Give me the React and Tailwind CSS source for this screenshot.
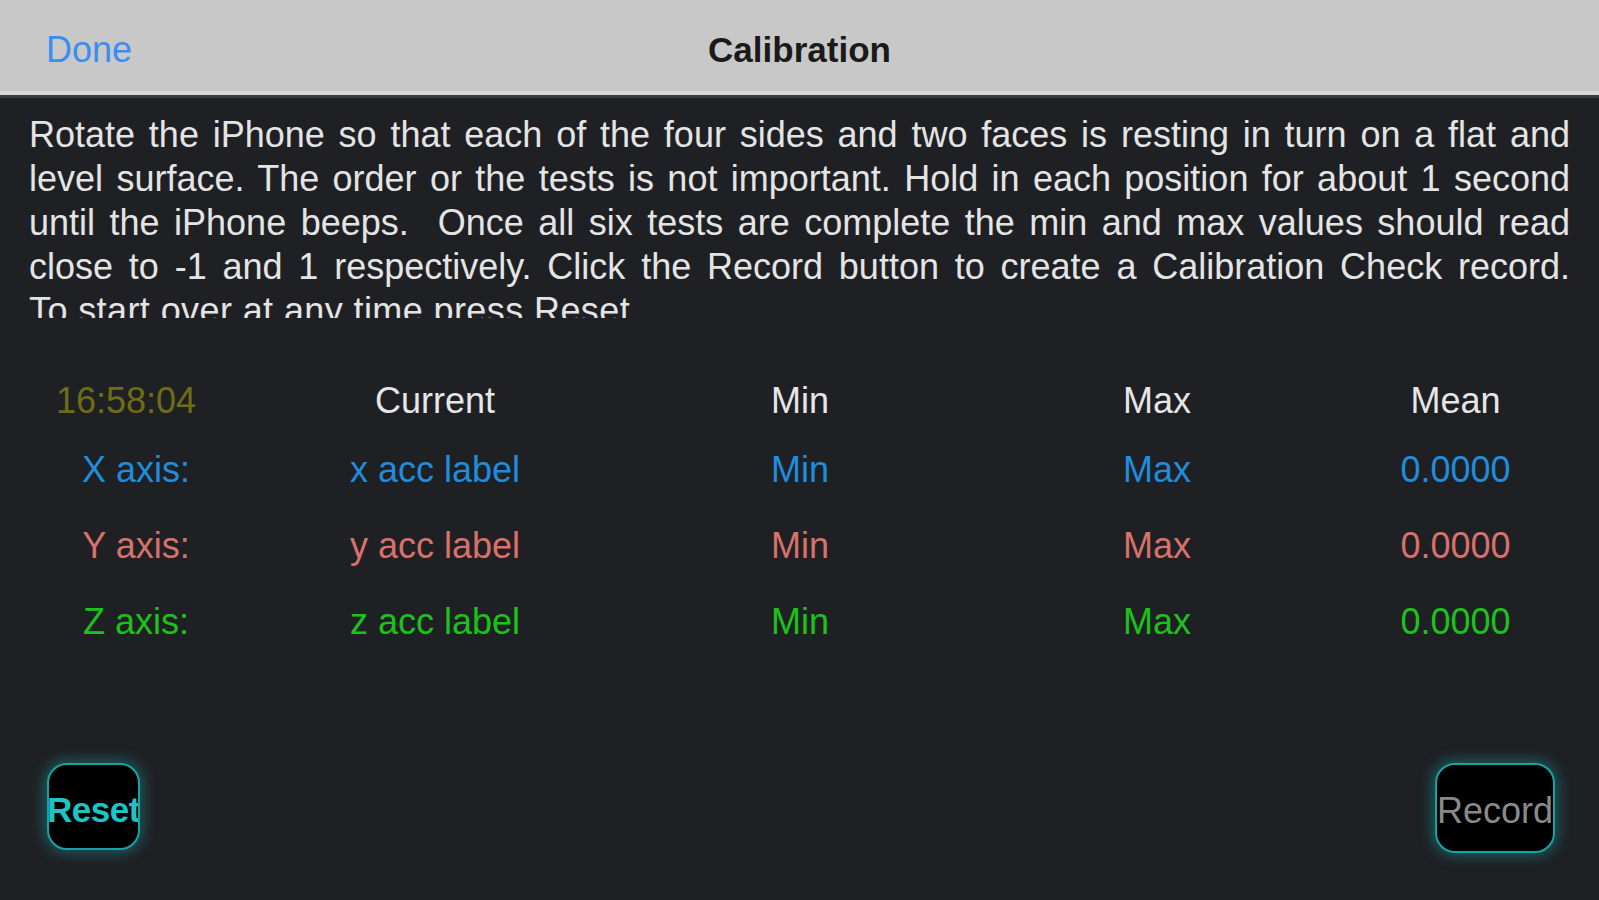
import React from "react";

const lines = [
  "Rotate the iPhone so that each of the four sides and two faces is resting in turn on a flat and",
  "level surface. The order or the tests is not important. Hold in each position for about 1 second",
  "until the iPhone beeps.  Once all six tests are complete the min and max values should read",
  "close to -1 and 1 respectively. Click the Record button to create a Calibration Check record.",
];

const rows = [
  { label: "X axis:", cur: "x acc label", color: "text-[#1f8ddb]" },
  { label: "Y axis:", cur: "y acc label", color: "text-[#d8716a]" },
  { label: "Z axis:", cur: "z acc label", color: "text-[#1cc21c]" },
];

const grid = "grid grid-cols-[272px_326px_404px_310px_287px] items-center h-[40px] text-center leading-[40px]";

export default function App() {
  return (
    <div className="w-[1599px] h-[900px] overflow-hidden bg-[#1f2024] flex flex-col" style={{ fontFamily: '"Liberation Sans", Arial, sans-serif' }}>
      {/* Nav bar */}
      <div className="h-[91px] bg-[#c8c8c8] relative flex items-center">
        <div className="pl-[46px] text-[36px] text-[#3b8ef0] leading-none pt-[8px]">Done</div>
        <div className="absolute left-0 right-0 top-[8px] bottom-0 flex items-center justify-center text-[35px] font-bold text-[#1a1a1a] leading-none pointer-events-none">
          Calibration
        </div>
      </div>
      <div className="h-[4px] bg-[#d8d8d8]" />
      <div className="h-[3px] bg-[#3a3a3a]" />

      {/* Instructions */}
      <div className="mt-[15px] px-[29px] h-[205px] overflow-hidden text-[36px] leading-[44px] text-[#e4e4e4]">
        {lines.map((l, i) => (
          <div key={i} className="text-justify [text-align-last:justify] whitespace-pre-wrap">
            {l}
          </div>
        ))}
        <div className="tracking-[0.4px]">To start over at any time press Reset.</div>
      </div>

      {/* Table */}
      <div className="mt-[63px] text-[36px]">
        <div className={grid + " mb-[29px] text-[#e6e6e6]"}>
          <div className="pr-[20px] text-[#6e6c14]">16:58:04</div>
          <div>Current</div>
          <div>Min</div>
          <div>Max</div>
          <div>Mean</div>
        </div>
        <div className="flex flex-col gap-[36px]">
          {rows.map((r) => (
            <div key={r.label} className={grid + " " + r.color}>
              <div>{r.label}</div>
              <div>{r.cur}</div>
              <div>Min</div>
              <div>Max</div>
              <div>0.0000</div>
            </div>
          ))}
        </div>
      </div>

      {/* Buttons */}
      <div className="mt-[121px] flex justify-between items-start pl-[47px] pr-[44px]">
        <div className="w-[93px] h-[87px] rounded-[20px] bg-black border-2 border-[#17a3a3] shadow-[0_0_14px_3px_rgba(23,163,163,0.45)] flex items-center justify-center overflow-hidden">
          <span className="text-[35px] font-bold text-[#1ec4c4] leading-none pt-[6px] tracking-[-0.5px]">Reset</span>
        </div>
        <div className="w-[120px] h-[90px] rounded-[20px] bg-black border-2 border-[#17a3a3] shadow-[0_0_14px_3px_rgba(23,163,163,0.45)] flex items-center justify-center overflow-hidden">
          <span className="text-[36px] text-[#8a8a8a] leading-none pt-[6px]">Record</span>
        </div>
      </div>
    </div>
  );
}
